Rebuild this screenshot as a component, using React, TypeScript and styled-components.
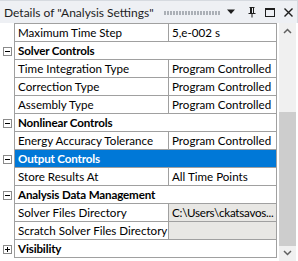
import React from "react";
import styled, { createGlobalStyle } from "styled-components";

const Global = createGlobalStyle`
  html, body { margin: 0; padding: 0; background: #ffffff; }
  body { font-family: Lato, "Noto Sans", "DejaVu Sans", sans-serif; }
`;

const Panel = styled.div`
  width: 298px;
  height: 261px;
  display: flex;
  flex-direction: column;
  background: #ffffff;
  overflow: hidden;
`;

const TitleBar = styled.div`
  height: 23px;
  box-sizing: border-box;
  display: flex;
  align-items: center;
  padding: 0 4px 0 4px;
  background: #eef0f4;
  border-top: 1px solid #d6dae0;
  border-right: 1px solid #d6dae0;
  gap: 4px;
`;

const Title = styled.span`
  font-size: 12px;
  color: #1e1e1e;
  white-space: nowrap;
  padding-top: 1px;
`;

const Gripper = styled.div`
  flex: 1;
  height: 4px;
  margin: 2px 2px 0 6px;
  background-image: radial-gradient(circle at 1px 1px, #a6abb2 0.7px, transparent 0.8px);
  background-size: 3px 2px;
`;

const Icons = styled.div`
  display: flex;
  align-items: center;
  gap: 4px;
`;

const Body = styled.div`
  flex: 1;
  display: flex;
  min-height: 0;
`;

const Grid = styled.div`
  width: 277px;
  display: flex;
  flex-direction: column;
`;

const Row = styled.div`
  display: grid;
  grid-template-columns: 14px 154px 109px;
  height: 18px;
`;

const Gutter = styled.div`
  display: flex;
  align-items: center;
  justify-content: center;
  padding-left: 1px;
`;

const Box = styled.div`
  width: 7px;
  height: 7px;
  border: 1px solid #8a8a8a;
  background: #fff;
  display: flex;
  align-items: center;
  justify-content: center;
`;

const Cell = styled.div<{ $bold?: boolean; $span?: boolean; $selected?: boolean; $readonly?: boolean; $last?: boolean }>`
  box-sizing: border-box;
  grid-column: ${(p) => (p.$span ? "2 / 4" : "auto")};
  border-left: 1px solid #a0a0a0;
  border-right: ${(p) => (p.$span || p.$last ? "1px solid #a0a0a0" : "none")};
  border-bottom: 1px solid #a0a0a0;
  background: ${(p) => (p.$selected ? "#0078d7" : p.$readonly ? "#e8e7e4" : "#ffffff")};
  color: ${(p) => (p.$selected ? "#ffffff" : "#000000")};
  font-size: 11.6px;
  font-weight: ${(p) => (p.$bold ? 700 : 400)};
  letter-spacing: ${(p) => (p.$bold ? "-0.15px" : p.$readonly ? "-0.25px" : "0")};
  line-height: 17px;
  padding-left: 3px;
  white-space: nowrap;
  overflow: hidden;
`;

const TopLine = styled.div`
  height: 1px;
  margin-left: 14px;
  width: 263px;
  background: #a0a0a0;
`;

const Scrollbar = styled.div`
  width: 17px;
  margin-left: 2px;
  display: flex;
  flex-direction: column;
  align-items: stretch;
  background: #f0f0f0;
`;

const Arrow = styled.div`
  height: 17px;
  display: flex;
  align-items: center;
  justify-content: center;
`;

const Track = styled.div`
  flex: 1;
  display: flex;
  flex-direction: column;
`;

const Thumb = styled.div`
  margin-top: 73px;
  height: 134px;
  background: #cdcdcd;
`;

const Expander = ({ open }: { open: boolean }) => (
  <Gutter>
    <Box>
      <svg width="7" height="7" viewBox="0 0 7 7">
        <rect x="1" y="3" width="5" height="1" fill="#000" />
        {!open && <rect x="3" y="1" width="1" height="5" fill="#000" />}
      </svg>
    </Box>
  </Gutter>
);

type Item =
  | { kind: "prop"; name: string; value: string; readonly?: boolean }
  | { kind: "cat"; name: string; open: boolean; selected?: boolean };

const items: Item[] = [
  { kind: "prop", name: "Maximum Time Step", value: "5,e-002 s" },
  { kind: "cat", name: "Solver Controls", open: true },
  { kind: "prop", name: "Time Integration Type", value: "Program Controlled" },
  { kind: "prop", name: "Correction Type", value: "Program Controlled" },
  { kind: "prop", name: "Assembly Type", value: "Program Controlled" },
  { kind: "cat", name: "Nonlinear Controls", open: true },
  { kind: "prop", name: "Energy Accuracy Tolerance", value: "Program Controlled" },
  { kind: "cat", name: "Output Controls", open: true, selected: true },
  { kind: "prop", name: "Store Results At", value: "All Time Points" },
  { kind: "cat", name: "Analysis Data Management", open: true },
  { kind: "prop", name: "Solver Files Directory", value: "C:\\Users\\ckatsavos...", readonly: true },
  { kind: "prop", name: "Scratch Solver Files Directory", value: "", readonly: true },
  { kind: "cat", name: "Visibility", open: false },
];

export default function App() {
  return (
    <>
      <Global />
      <Panel>
        <TitleBar>
          <Title>Details of "Analysis Settings"</Title>
          <Gripper />
          <Icons>
            <svg width="9" height="6" viewBox="0 0 9 6">
              <path d="M0 0.5 H8 L4 5 Z" fill="#1e1e1e" />
            </svg>
            <span style={{ width: 4 }} />
            <svg width="8" height="11" viewBox="0 0 8 11">
              <path d="M1.5 0.5 H6.5 M2.5 0.5 V6.5 M5.5 0.5 V6.5 M0.5 6.5 H7.5 M4 6.5 V10.5" stroke="#1e1e1e" strokeWidth="1" fill="none" />
              <rect x="2" y="0" width="2" height="7" fill="#1e1e1e" />
            </svg>
            <span style={{ width: 1 }} />
            <svg width="10" height="10" viewBox="0 0 10 10">
              <rect x="0.5" y="1.5" width="9" height="8" fill="none" stroke="#1e1e1e" />
              <rect x="0" y="1" width="10" height="2" fill="#1e1e1e" />
            </svg>
            <span style={{ width: 1 }} />
            <svg width="9" height="9" viewBox="0 0 9 9">
              <path d="M0.5 0.5 L8.5 8.5 M8.5 0.5 L0.5 8.5" stroke="#1e1e1e" strokeWidth="1.4" />
            </svg>
          </Icons>
        </TitleBar>
        <Body>
          <Grid>
            <TopLine />
            {items.map((it, i) =>
              it.kind === "prop" ? (
                <Row key={i}>
                  <Gutter />
                  <Cell>{it.name}</Cell>
                  <Cell $readonly={it.readonly} $last>
                    {it.value}
                  </Cell>
                </Row>
              ) : (
                <Row key={i}>
                  <Expander open={it.open} />
                  <Cell $span $bold $selected={it.selected}>
                    {it.name}
                  </Cell>
                </Row>
              )
            )}
          </Grid>
          <Scrollbar>
            <Arrow>
              <svg width="9" height="6" viewBox="0 0 9 6">
                <path d="M1 5 L4.5 1.5 L8 5" stroke="#606060" strokeWidth="1.5" fill="none" />
              </svg>
            </Arrow>
            <Track>
              <Thumb />
            </Track>
            <Arrow>
              <svg width="9" height="6" viewBox="0 0 9 6">
                <path d="M1 1 L4.5 4.5 L8 1" stroke="#606060" strokeWidth="1.5" fill="none" />
              </svg>
            </Arrow>
          </Scrollbar>
        </Body>
      </Panel>
    </>
  );
}
